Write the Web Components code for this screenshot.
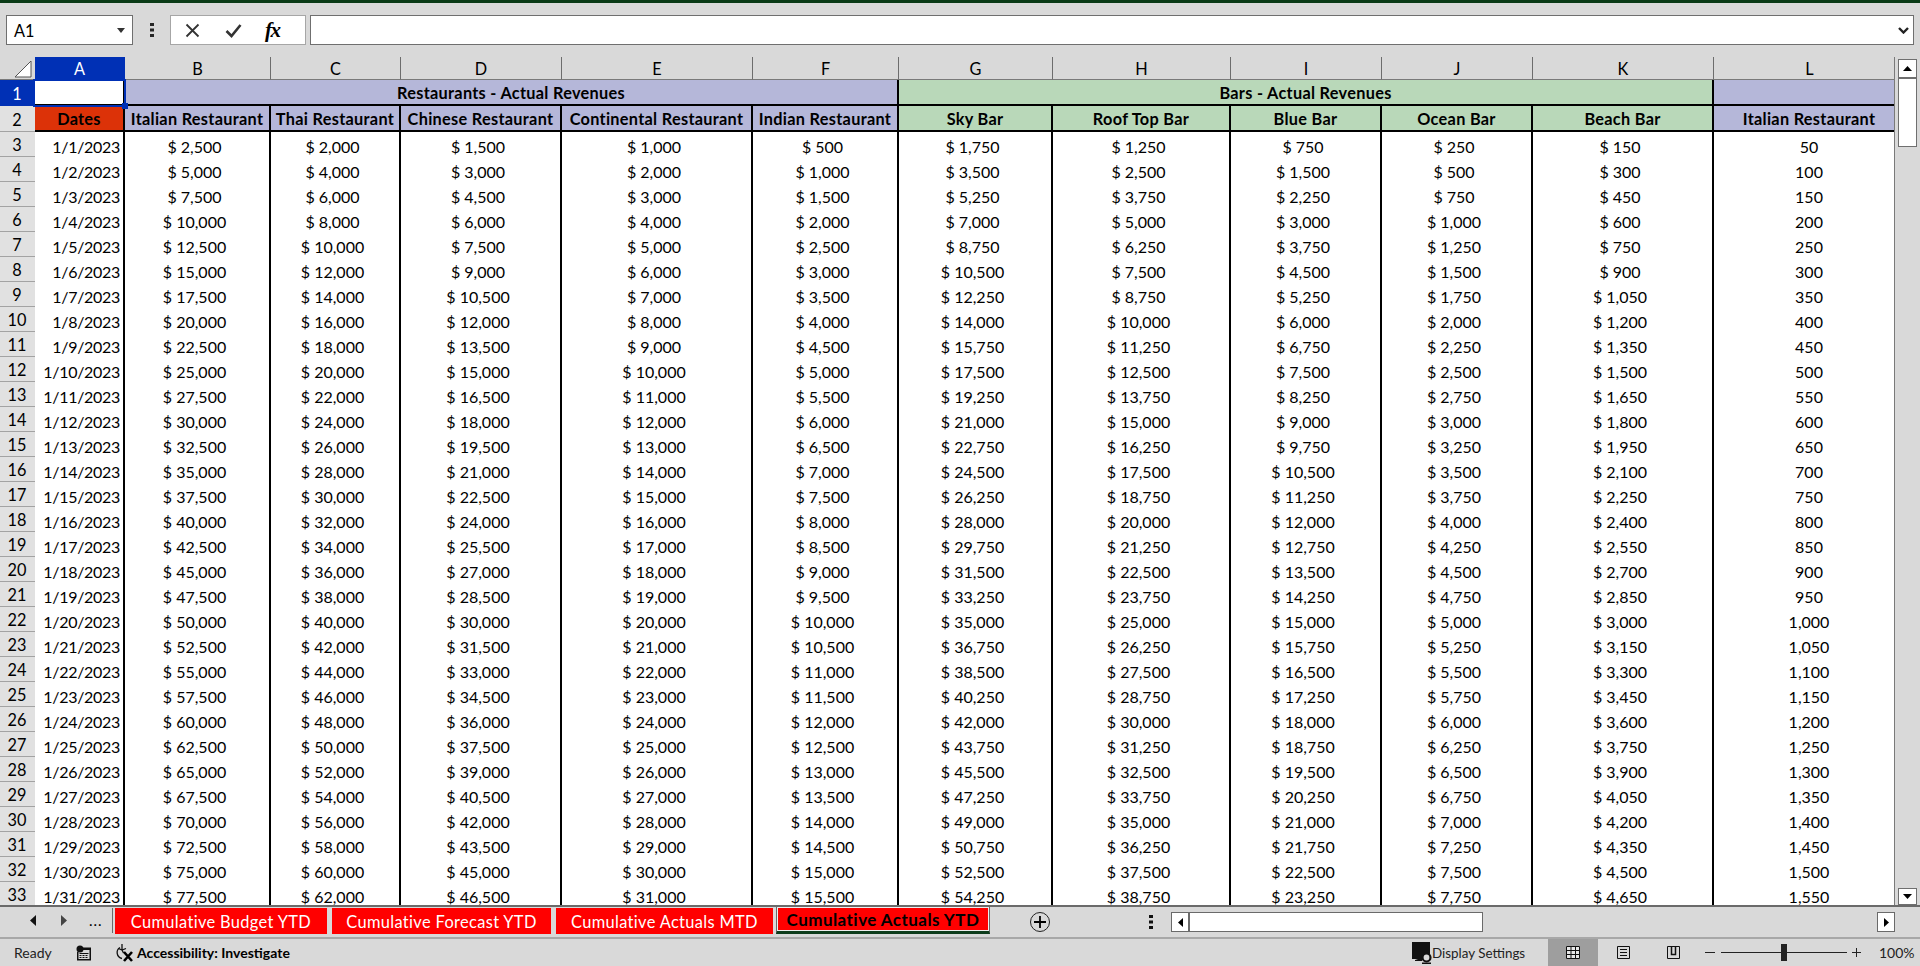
<!DOCTYPE html>
<html>
<head>
<meta charset="utf-8">
<style>
html, body { margin: 0; padding: 0; height: 100%; overflow: hidden; background: #d9d9d9; }
body { font-family: Lato, "Open Sans", sans-serif; color: #000; }
</style>
</head>
<body>
<xl-app>
  <xl-formula-bar slot="top" cell="A1"></xl-formula-bar>
  <xl-sheet slot="sheet"></xl-sheet>
  <xl-tabs slot="tabs">
    <xl-tab w="212">Cumulative Budget YTD</xl-tab>
    <xl-tab w="219">Cumulative Forecast YTD</xl-tab>
    <xl-tab w="217">Cumulative Actuals MTD</xl-tab>
    <xl-tab w="214" active>Cumulative Actuals YTD</xl-tab>
  </xl-tabs>
  <xl-status slot="status"></xl-status>
</xl-app>

<script>
// shell
class XlApp extends HTMLElement {
  constructor() {
    super();
    this.attachShadow({ mode: 'open' }).innerHTML = `
<style>
:host { display: flex; flex-direction: column; width: 1920px; height: 966px; background: #d9d9d9; overflow: hidden; }
.band { height: 3px; background: #0a3a16; flex: none; }
</style>
<div class="band"></div>
<slot name="top"></slot>
<slot name="sheet"></slot>
<slot name="tabs"></slot>
<slot name="status"></slot>`;
  }
}

// name box, fx buttons and the formula input
class XlFormulaBar extends HTMLElement {
  constructor() {
    super();
    this.attachShadow({ mode: 'open' }).innerHTML = `
<style>
:host { display: flex; flex: none; align-items: flex-start; height: 54px; padding: 12px 0 0 6px; box-sizing: border-box; }
.name { width: 127px; height: 30px; box-sizing: border-box; border: 1px solid #6f6f6f; background: #fff; display: flex; align-items: center; justify-content: space-between; padding: 0 7px 0 7px; font-size: 16.300px; }
.dots { width: 37px; display: flex; justify-content: center; padding-top: 8px; }
.fx { width: 136px; height: 30px; box-sizing: border-box; border: 1px solid #a6a6a6; background: #fff; display: flex; align-items: center; padding-left: 14px; }
.fx .b { width: 45px; display: flex; justify-content: flex-start; }
.fx i { font: italic bold 21px "Liberation Serif", serif; letter-spacing: -1.500px; line-height: 1; }
.input { margin-left: 4px; width: 1604px; height: 30px; box-sizing: border-box; border: 1px solid #6f6f6f; background: #fff; display: flex; align-items: center; justify-content: flex-end; padding-right: 4px; }
svg { display: block; }
</style>
<div class="name"><span></span><svg width="8" height="5"><path d="M0 0h8L4 5z" fill="#333"/></svg></div>
<div class="dots"><svg width="4" height="14"><path d="M0 0h4v3H0zM0 5.500h4v3H0zM0 11h4v3H0z" fill="#262626"/></svg></div>
<div class="fx">
  <div class="b"><svg width="15" height="15"><path d="M1.500 1.500l12 12M13.500 1.500l-12 12" stroke="#333" stroke-width="1.800" fill="none"/></svg></div>
  <div class="b"><svg width="17" height="15"><path d="M1.500 8l5 5L15.500 2" stroke="#333" stroke-width="2.600" fill="none"/></svg></div>
  <div class="b"><i>fx</i></div>
</div>
<div class="input"><svg width="11" height="7"><path d="M1 1l4.500 4.500L10 1" stroke="#222" stroke-width="2.400" fill="none"/></svg></div>`;
    this.shadowRoot.querySelector('.name span').textContent = this.getAttribute('cell') || '';
  }
}

const COLS = [
  ['A', 90], ['B', 146], ['C', 130], ['D', 161], ['E', 191], ['F', 146],
  ['G', 154], ['H', 178], ['I', 151], ['J', 151], ['K', 181], ['L', 192]
];
const HEADS = ['Dates', 'Italian Restaurant', 'Thai Restaurant', 'Chinese Restaurant', 'Continental Restaurant', 'Indian Restaurant',
  'Sky Bar', 'Roof Top Bar', 'Blue Bar', 'Ocean Bar', 'Beach Bar', 'Italian Restaurant'];
const RATES = [2500, 2000, 1500, 1000, 500, 1750, 1250, 750, 250, 150];

// the cells, rows 1 to 33
class XlSheet extends HTMLElement {
  constructor() {
    super();
    let h = '<div class="corner"><svg width="18" height="18"><path d="M1 17L17 1v16z" fill="#fff" stroke="#555" stroke-width="1"/></svg></div>';
    COLS.forEach(c => { h += `<div class="ch${c[0] == 'A' ? ' sel' : ''}">${c[0]}</div>`; });
    // row 1
    h += '<div class="rh sel">1</div><div class="c a1"></div>';
    h += '<div class="c t pu" style="grid-column:span 5">Restaurants - Actual Revenues</div>';
    h += '<div class="c t gr" style="grid-column:span 5">Bars - Actual Revenues</div>';
    h += '<div class="c t pu"></div>';
    // row 2
    h += '<div class="rh">2</div>';
    HEADS.forEach((t, i) => {
      const cls = i == 0 ? 'rd' : (i < 6 || i == 11 ? 'pu' : 'gr');
      h += `<div class="c t ${cls}">${t}</div>`;
    });
    // data
    for (let i = 1; i <= 31; i++) {
      h += `<div class="rh">${i + 2}</div><div class="c d date">1/${i}/2023</div>`;
      RATES.forEach(r => { h += `<div class="c d n">$ ${(r * i).toLocaleString('en-US')}</div>`; });
      h += `<div class="c d l">${(50 * i).toLocaleString('en-US')}</div>`;
    }
    this.attachShadow({ mode: 'open' }).innerHTML = `
<style>
:host { display: flex; flex: none; height: 848px; overflow: hidden; position: relative; }
.view { width: 1895px; flex: none; box-sizing: border-box; border-right: 1px solid #7a7a7a; overflow: hidden; position: relative; }
.grid { display: grid; width: 1925px; grid-template-columns: 35px ${COLS.map(c => c[1] + 'px').join(' ')}; grid-template-rows: 23px 26px 26px; grid-auto-rows: 25px; font-size: 16px; }
.corner { padding: 3px 0 0 14px; box-sizing: border-box; border-bottom: 1px solid #7a7a7a; }
.ch { display: flex; align-items: center; justify-content: center; font-size: 16.300px; border-right: 1px solid #6d6d6d; border-bottom: 1px solid #7a7a7a; box-sizing: border-box; }
.ch.sel { background: #0030b5; color: #fff; border-right-color: #0030b5; }
.rh { display: flex; align-items: center; justify-content: center; font-size: 16.300px; background: #e1e1e1; border-bottom: 1px solid #a3a3a3; box-sizing: border-box; padding: 1px 1px 0 0; }
.rh.sel { background: #0030b5; color: #fff; border-bottom-color: #0030b5; }
.c { box-sizing: border-box; display: flex; align-items: center; justify-content: center; white-space: nowrap; border-right: 2px solid #000; background: #fff; overflow: hidden; }
.t { font-weight: 700; font-size: 16.300px; letter-spacing: .3px; border-bottom: 2px solid #000; padding-top: 1px; }
.pu { background: #b5b7d9; }
.gr { background: #b9d8b9; }
.rd { background: #dc3208; }
.a1 { border-bottom: 2px solid #000; }
.d { padding-top: 3px; }
.date { justify-content: flex-end; padding-right: 3px; letter-spacing: -.3px; }
.n { padding-right: 5px; }
.cursor { position: absolute; left: 33px; top: 22px; width: 93px; height: 28px; box-sizing: border-box; border: 2.500px solid #0030b5; }
.cursor::after { content: ""; position: absolute; right: -4px; bottom: -4px; width: 6px; height: 6px; background: #0030b5; }
.vs { flex: 1; position: relative; }
.btn { position: absolute; left: 3px; width: 19px; box-sizing: border-box; border: 1px solid #6f6f6f; background: #fff; display: flex; align-items: center; justify-content: center; }
.up { top: 2px; height: 19px; }
.thumb { position: absolute; left: 3px; width: 19px; top: 21px; height: 69px; box-sizing: border-box; border: 1px solid #6f6f6f; background: #fff; }
.dn { bottom: 0; height: 17px; }
</style>
<div class="view">
  <div class="grid">${h}</div>
  <div class="cursor"></div>
</div>
<div class="vs">
  <div class="btn up"><svg width="9" height="5"><path d="M4.500 0L9 5H0z"/></svg></div>
  <div class="thumb"></div>
  <div class="btn dn"><svg width="9" height="5"><path d="M0 0h9L4.500 5z"/></svg></div>
</div>`;
  }
}

// one sheet tab
class XlTab extends HTMLElement {
  constructor() {
    super();
    this.attachShadow({ mode: 'open' }).innerHTML = `
<style>
:host { display: flex; flex: none; align-items: center; justify-content: center; box-sizing: border-box; height: 26px; margin-right: 5px; background: #ff0000; color: #fff; font-size: 16.400px; letter-spacing: .35px; white-space: nowrap; }
:host([active]) { height: 29px; margin: -3px 0 0 -2px; color: #000; font-weight: 700; font-size: 17px; letter-spacing: .45px; border-style: solid; border-width: 2px 1px 3px; border-color: #6a6a6a #6a6a6a #0d3d1c; box-shadow: inset 0 0 0 1px #eeeeee; }
</style>
<slot></slot>`;
    this.style.width = this.getAttribute('w') + 'px';
  }
}

class XlTabs extends HTMLElement {
  constructor() {
    super();
    this.attachShadow({ mode: 'open' }).innerHTML = `
<style>
:host { display: flex; flex: none; height: 32px; box-sizing: border-box; border-top: 2px solid #6a6a6a; align-items: flex-start; padding-top: 1px; }
.nav { width: 113px; flex: none; height: 25px; box-sizing: border-box; border-right: 1px solid #6a6a6a; display: flex; align-items: center; padding-left: 30px; margin-right: 2px; }
.nav span { font-size: 15px; margin-left: 22px; letter-spacing: 1px; line-height: 1; }
.nav svg + svg { margin-left: 25px; }
.plus { margin-left: 39px; margin-top: 3px; }
.dots { margin-left: 98px; margin-top: 7px; }
.hs { margin-left: 18px; margin-top: 4px; width: 312px; height: 20px; box-sizing: border-box; border: 1px solid #6a6a6a; background: #fff; display: flex; }
.hs b { width: 18px; flex: none; border-right: 2px solid #6a6a6a; display: flex; align-items: center; justify-content: center; box-sizing: border-box; }
.rb { margin-left: 394px; margin-top: 4px; width: 18px; height: 20px; box-sizing: border-box; border: 1px solid #6a6a6a; background: #fff; display: flex; align-items: center; justify-content: center; }
svg { display: block; flex: none; }
</style>
<div class="nav">
  <svg width="6" height="11"><path d="M6 0v11L0 5.500z" fill="#111"/></svg>
  <svg width="6" height="11"><path d="M0 0v11l6-5.500z" fill="#444"/></svg>
  <span>...</span>
</div>
<slot></slot>
<svg class="plus" width="22" height="22"><circle cx="11" cy="11" r="9.500" fill="none" stroke="#222" stroke-width="1"/><path d="M11 5v12M5 11h12" stroke="#000" stroke-width="1.800"/></svg>
<svg class="dots" width="4" height="14"><path d="M0 0h4v3H0zM0 5.500h4v3H0zM0 11h4v3H0z" fill="#111"/></svg>
<div class="hs"><b><svg width="5" height="9"><path d="M5 0v9L0 4.500z"/></svg></b></div>
<div class="rb"><svg width="5" height="9"><path d="M0 0v9l5-4.500z"/></svg></div>`;
  }
}

// bottom status bar
class XlStatus extends HTMLElement {
  constructor() {
    super();
    this.attachShadow({ mode: 'open' }).innerHTML = `
<style>
:host { display: flex; flex: 1; align-items: center; box-sizing: border-box; border-top: 2px solid #a8a8a8; font-size: 14px; color: #222; white-space: nowrap; }
.ready { margin-left: 14px; width: 62px; }
.acc { margin-left: 23px; }
.acctext { margin-left: 3px; font-weight: 700; color: #000; font-size: 14px; }
.disp { margin-left: auto; }
.disptext { width: 116px; font-size: 13.400px; }
.view { width: 50px; align-self: stretch; display: flex; align-items: center; justify-content: center; }
.view.on { background: #9e9e9e; }
.view.on svg { background: #e8e8e8; }
.minus { margin-left: 7px; width: 10px; height: 1px; background: #222; }
.slider { margin-left: 6px; width: 126px; height: 1px; background: #222; position: relative; }
.slider i { position: absolute; left: 60px; top: -8px; width: 6px; height: 17px; background: #222; }
.plus { margin-left: 5px; }
.pct { margin-left: 18px; width: 41px; }
svg { display: block; flex: none; }
</style>
<span class="ready">Ready</span>
<svg width="16" height="16"><circle cx="4" cy="4" r="3.500" fill="#111"/><path d="M6 2.500h9v13H1V7h1.500v7h11V5H6z" fill="#111"/><path d="M3.500 8h9v1h-9zM3.500 10h2v1h-2zm3 0h2v1h-2zm3 0h2v1h-2zM3.500 12h2v1h-2zm3 0h2v1h-2zm3 0h2v1h-2z" fill="#111"/></svg>
<svg class="acc" width="19" height="19" viewBox="0 0 19 19"><path d="M5 4.500A6 6 0 0 0 7 15.500" fill="none" stroke="#111" stroke-width="1.300"/><path d="M7 1v6M3.500 5.500L7 7l4-1.500M7 7l1.500 3" fill="none" stroke="#111" stroke-width="1.300"/><path d="M9 9l8 9M17 9l-8 9" stroke="#000" stroke-width="2.600"/></svg>
<span class="acctext">Accessibility: Investigate</span>
<svg class="disp" width="21" height="22" viewBox="0 0 21 22"><path d="M1 0h18v14h-4l-4 3H1z" fill="#111"/><path d="M7 17h4v2H4v-1z" fill="#111"/><circle cx="15.500" cy="15.500" r="4" fill="#d9d9d9" stroke="#111" stroke-width="2.200"/><path d="M11 20.500h9v1.500h-9z" fill="#111"/></svg>
<span class="disptext">Display Settings</span>
<div class="view on"><svg width="14" height="13"><path d="M.500.500h13v12H.500zM.500 4.500h13M.500 8.500h13M5 .500v12M9.500 .500v12" fill="none" stroke="#111"/></svg></div>
<div class="view"><svg width="13" height="13"><path d="M.500.500h12v12H.500z" fill="none" stroke="#111"/><path d="M3 3.500h7M3 6.500h7M3 9.500h7" stroke="#111"/></svg></div>
<div class="view"><svg width="13" height="13"><path d="M.500.500h12v12H.500z" fill="none" stroke="#111"/><path d="M4.500 0v8.500h4V0" fill="none" stroke="#111" stroke-width="1.500"/></svg></div>
<div class="minus"></div>
<div class="slider"><i></i></div>
<svg class="plus" width="9" height="9"><path d="M4.500 0v9M0 4.500h9" stroke="#222" stroke-width="1"/></svg>
<span class="pct">100%</span>`;
  }
}

customElements.define('xl-app', XlApp);
customElements.define('xl-formula-bar', XlFormulaBar);
customElements.define('xl-sheet', XlSheet);
customElements.define('xl-tab', XlTab);
customElements.define('xl-tabs', XlTabs);
customElements.define('xl-status', XlStatus);
</script>
</body>
</html>
